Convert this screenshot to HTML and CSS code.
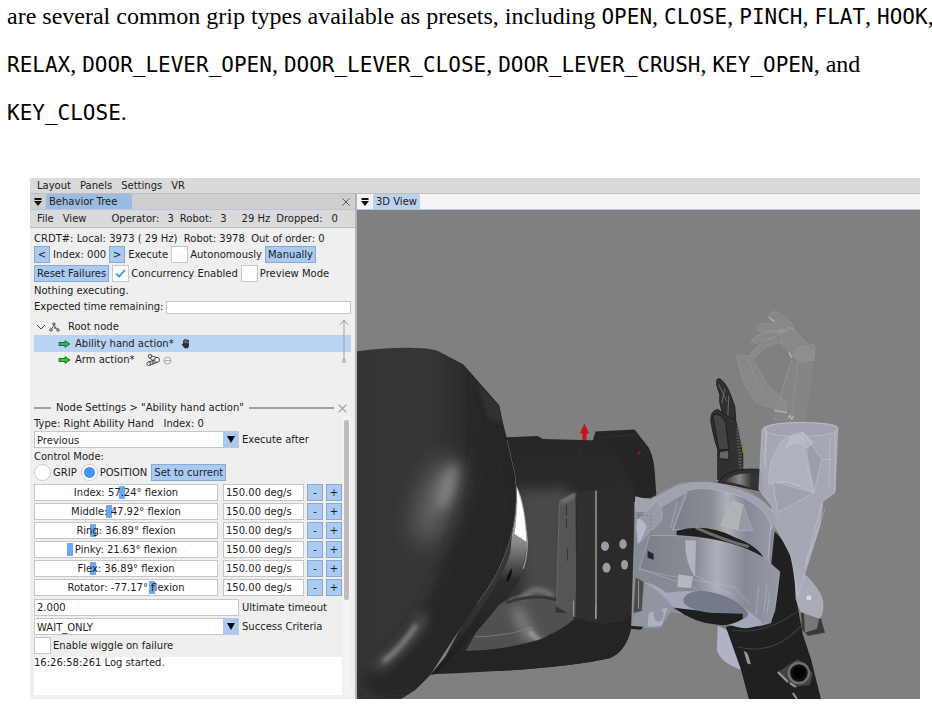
FILE: index.html
```html
<!DOCTYPE html>
<html lang="en">
<head>
<meta charset="utf-8">
<title>Grip presets</title>
<link rel="stylesheet" href="styles.css">
</head>
<body>
<p class="prose">are several common grip types available as presets, including <code>OPEN</code>, <code>CLOSE</code>, <code>PINCH</code>, <code>FLAT</code>, <code>HOOK</code>,<br><code>RELAX</code>, <code>DOOR_LEVER_OPEN</code>, <code>DOOR_LEVER_CLOSE</code>, <code>DOOR_LEVER_CRUSH</code>, <code>KEY_OPEN</code>, and<br><code>KEY_CLOSE</code>.</p>

<main class="app">
  <nav class="menubar"><a href="#">Layout</a><a href="#">Panels</a><a href="#">Settings</a><a href="#">VR</a></nav>
  <div class="columns">
    <section class="panel">
      <header class="tabs">
        <svg class="fold" viewBox="0 0 8 8"><path d="M.5 0h7v2h-7zM0 3h8L4 8z"/></svg>
        <h2 class="tab">Behavior Tree</h2>
        <button class="close" aria-label="Close panel"><svg viewBox="0 0 8 8"><path d="M.5.5l7 7m0-7l-7 7"/></svg></button>
      </header>
      <div class="status">
        <a href="#">File</a><a href="#">View</a>
        <span class="stat op">Operator:<b>3</b></span><span class="stat">Robot:<b>3</b></span><span class="stat hz">29 Hz</span><span class="stat drop">Dropped:<b>0</b></span>
      </div>
      <div class="controls">
        <p class="line crdt">CRDT#: Local: 3973 ( 29 Hz)  Robot: 3978  Out of order: 0</p>
        <div class="row"><button class="btn sq">&lt;</button><span>Index: 000</span><button class="btn sq">&gt;</button><span>Execute</span><label class="check"><input type="checkbox"><span>Autonomously</span></label><button class="btn">Manually</button></div>
        <div class="row last"><button class="btn">Reset Failures</button><label class="check"><input type="checkbox" checked><svg class="tick" viewBox="0 0 12 10"><path d="M1 5l3.500 3.500L11 1"/></svg><span>Concurrency Enabled</span></label><label class="check"><input type="checkbox"><span>Preview Mode</span></label></div>
        <p class="line">Nothing executing.</p>
        <label class="expected"><span>Expected time remaining:</span><input type="text"></label>
      </div>
      <div class="tree">
        <ul>
          <li class="root"><svg class="chev" viewBox="0 0 10 6"><path d="M1 1l4 4 4-4"/></svg><svg class="nodes" viewBox="0 0 11 10"><path d="M5 3L2.500 7M5 3l1.500 2.500L8.500 7"/><circle cx="5" cy="2" r="1.200"/><circle cx="2" cy="8" r="1.300"/><circle cx="6" cy="6" r=".6"/><circle cx="9" cy="8" r="1.300"/></svg>Root node</li>
          <li class="leaf selected"><svg class="arrow teal" viewBox="0 0 13 8"><path d="M1 2.500h6V.7L12 4 7 7.300V5.500H1z"/></svg>Ability hand action*<svg class="hand" viewBox="0 0 9 11"><path d="M2.200 8.500L.8 6.500Q.8 5 2 6V2.500q.6-1 1.200 0V1.500q.7-1 1.300 0 .7-.8 1.300.2.7-.7 1.200.3.9-.3 1 .7V8L7 10.300H3.500z"/><path class="slits" d="M3.200 2.500v2.800M4.600 2v3M5.900 2.400v2.800M7.100 3v2.500"/></svg></li>
          <li class="leaf"><svg class="arrow" viewBox="0 0 13 8"><path d="M1 2.500h6V.7L12 4 7 7.300V5.500H1z"/></svg>Arm action*<svg class="joint" viewBox="0 0 14 12"><path d="M5.200 1.500l5 2M3 3.500l4.500 3.300M11 8.400l-7.500 3M8.500 5.700L2 8.300"/><circle cx="4" cy="2.200" r="1.700"/><circle cx="11" cy="5.900" r="2.500"/><circle cx="2.700" cy="9.700" r="1.800"/><circle cx="7" cy="8.500" r="1"/></svg><svg class="minus" viewBox="0 0 9 9"><circle cx="4.500" cy="4.500" r="3.500"/><path d="M1 4.500h7"/></svg></li>
        </ul>
        <svg class="span" viewBox="0 0 10 45"><path d="M5 1v40M.8 6L5 1l4.200 5"/><circle cx="5" cy="42" r="1.500"/></svg>
      </div>
      <div class="divider"><i class="rule"></i><h3>Node Settings &gt; "Ability hand action"</h3><i class="rule grow"></i><button class="close faint" aria-label="Close settings"><svg viewBox="0 0 8 8"><path d="M.5.5l7 7m0-7l-7 7"/></svg></button></div>
      <div class="settings">
        <div class="form">
          <p class="line type">Type: Right Ability Hand   Index: 0</p>
          <label class="field"><span class="combo"><select><option>Previous</option></select><svg viewBox="0 0 8 7"><path d="M0 0h8L4 7z"/></svg></span>Execute after</label>
          <p class="line mode">Control Mode:</p>
          <div class="row radios"><label><input type="radio" name="mode">GRIP</label><label><input type="radio" name="mode" checked>POSITION</label><button class="btn">Set to current</button></div>
          <div class="fingers">
            <div class="finger"><label class="slide"><input type="range" min="0" max="1000" value="477"><span>Index: 57.24° flexion</span></label><input class="box" aria-label="Index speed" value="150.00 deg/s"><button class="btn sq">-</button><button class="btn sq">+</button></div>
            <div class="finger"><label class="slide"><input type="range" min="0" max="1000" value="403"><span>Middle: 47.92° flexion</span></label><input class="box" aria-label="Middle speed" value="150.00 deg/s"><button class="btn sq">-</button><button class="btn sq">+</button></div>
            <div class="finger"><label class="slide"><input type="range" min="0" max="1000" value="310"><span>Ring: 36.89° flexion</span></label><input class="box" aria-label="Ring speed" value="150.00 deg/s"><button class="btn sq">-</button><button class="btn sq">+</button></div>
            <div class="finger"><label class="slide"><input type="range" min="0" max="1000" value="182"><span>Pinky: 21.63° flexion</span></label><input class="box" aria-label="Pinky speed" value="150.00 deg/s"><button class="btn sq">-</button><button class="btn sq">+</button></div>
            <div class="finger"><label class="slide"><input type="range" min="0" max="1000" value="310"><span>Flex: 36.89° flexion</span></label><input class="box" aria-label="Flex speed" value="150.00 deg/s"><button class="btn sq">-</button><button class="btn sq">+</button></div>
            <div class="finger"><label class="slide"><input type="range" min="0" max="1000" value="645"><span>Rotator: -77.17° flexion</span></label><input class="box" aria-label="Rotator speed" value="150.00 deg/s"><button class="btn sq">-</button><button class="btn sq">+</button></div>
          </div>
          <div class="tail">
            <label class="field"><input class="box" value="2.000">Ultimate timeout</label>
            <label class="field"><span class="combo"><select><option>WAIT_ONLY</option></select><svg viewBox="0 0 8 7"><path d="M0 0h8L4 7z"/></svg></span>Success Criteria</label>
            <label class="check"><input type="checkbox"><span>Enable wiggle on failure</span></label>
          </div>
          <div class="log">16:26:58:261 Log started.</div>
        </div>
        <div class="track"><div class="thumb"></div></div>
      </div>
    </section>

    <section class="view">
      <header class="tabs">
        <svg class="fold" viewBox="0 0 8 8"><path d="M.5 0h7v2h-7zM0 3h8L4 8z"/></svg>
        <h2 class="tab">3D View</h2>
      </header>
      <svg class="scene" viewBox="357 210 563 488" preserveAspectRatio="xMinYMin slice" role="img" aria-label="Robot arm">
        <defs>
          <filter id="b2" x="-50%" y="-50%" width="200%" height="200%"><feGaussianBlur stdDeviation="2"/></filter>
          <filter id="b6" x="-80%" y="-80%" width="260%" height="260%"><feGaussianBlur stdDeviation="6"/></filter>
          <filter id="b12" x="-80%" y="-80%" width="260%" height="260%"><feGaussianBlur stdDeviation="13"/></filter>
          <linearGradient id="head" x1="0" x2="1" y1="0" y2="0"><stop offset="0" stop-color="#343434"/><stop offset=".45" stop-color="#363636"/><stop offset=".7" stop-color="#2a2a2a"/><stop offset="1" stop-color="#232323"/></linearGradient>
          <linearGradient id="torso" x1="0" x2="0" y1="0" y2="1"><stop offset="0" stop-color="#262626"/><stop offset=".25" stop-color="#2a2a2a"/><stop offset=".45" stop-color="#393939"/><stop offset=".75" stop-color="#303030"/><stop offset="1" stop-color="#202020"/></linearGradient>
          <linearGradient id="ring" x1="0" x2="0" y1="0" y2="1"><stop offset="0" stop-color="#c8c8c8"/><stop offset=".3" stop-color="#8a8a8a"/><stop offset=".5" stop-color="#2c2c2c"/><stop offset="1" stop-color="#1d1d1d"/></linearGradient>
          <linearGradient id="drum" x1="0" x2="1" y1="0" y2="0"><stop offset="0" stop-color="#797f89"/><stop offset=".4" stop-color="#898d95"/><stop offset=".55" stop-color="#adb0b9"/><stop offset=".75" stop-color="#858a96"/><stop offset="1" stop-color="#9599a6"/></linearGradient>
          <linearGradient id="cup" x1="0" x2="1" y1="0" y2="0"><stop offset="0" stop-color="#333"/><stop offset=".45" stop-color="#8a8780"/><stop offset=".8" stop-color="#333"/></linearGradient>
          <clipPath id="headclip"><path id="hp" d="M357 351Q385 347 410 347.500T440 352L463 364L499 405L502 420L507 440L515 474Q519 510 509 542Q500 574 477 603Q455 634 430 674L415 689L401 698H357Z"/></clipPath>
          <clipPath id="bodyclip"><path d="M500 437L537 435.500L543 438.500L600 440L615 452L633 484L635 550L632 620Q628 649 610 657L590 661Q530 670 436 673L480 590Z"/></clipPath>
        </defs>
        <rect x="357" y="210" width="1100" height="1000" fill="#808080"/>
        <path d="M592 441L595 431L634 429L648 447Q653 456 654 470L656 498L630 502L608 470Z" fill="#252525"/>
        <path d="M600 437L634 434L647 452" fill="none" stroke="#303030"/>
        <path d="M582 440V433H579.500L584 423L588.500 433H586V440Z" fill="#c71115"/><path d="M636.500 452.500l2-2.500 2 2.500-2 2.500z" fill="#a20b0f"/>
        <g clip-path="url(#bodyclip)">
          <rect x="430" y="430" width="210" height="250" fill="url(#torso)"/>
          <path d="M578 441Q586 465 590 488L596 490V620L575 620L573 480Z" fill="#292929"/>
          <path d="M517 487Q537 492 568 486L560 600L535 604L525 590Z" fill="#494949" filter="url(#b6)"/>
          <path d="M559 500L575 492L576 617L556 606Z" fill="#555"/><path d="M561 502L575 493" stroke="#999" stroke-width="2" filter="url(#b2)"/>
          <path d="M559 502L556 604" stroke="#686868"/><path d="M566 503v12m0 3v10m1 20v12" stroke="#333"/>
          <path d="M577 492L595 489L596 621L575 617Z" fill="#303030"/>
          <path d="M595.500 490V618" stroke="#999" stroke-width="1.500"/>
          <path d="M597 488L628 482L635 550L631 628L597 620Z" fill="#2b2b2b"/>
          <path d="M512 596Q530 588 556 598L555 612Q575 610 573 619Q540 647 465 651L488 610Z" fill="#505050"/>
          <path d="M521 598Q535 582 553 596" fill="none" stroke="#777" stroke-width="5" filter="url(#b2)"/>
          <path d="M506 602Q535 592 556 599" fill="none" stroke="#363636" stroke-width="3"/>
          <path d="M474 636Q510 635 532 626" fill="none" stroke="#767676"/>
          <path d="M515 607L532 641" stroke="#858585" stroke-width="10" filter="url(#b6)"/>
          <path d="M529 630Q540 645 548 638" fill="none" stroke="#bbb" stroke-width="3" filter="url(#b2)"/>
          <path d="M465 650Q544 648 573 619L597 622Q620 625 632 613L625 670H436Z" fill="#242424"/>
          <path d="M573 600V616M595 605V618" stroke="#999"/>
        </g>
        <path d="M516 485Q526 505 527 543L522 570Q516 592 498 605Q479 630 436 673L430 674Q496 597 510 552Z" fill="url(#ring)"/>
        <path d="M516.500 488Q525 510 526 541L514 533Q518 512 516.500 488Z" fill="#fff"/>
        <path d="M526 530Q529 550 523 568" fill="none" stroke="#aaa"/>
        <path d="M512 567Q506 574 506 581Q511 580 512 567Z" fill="#111"/>
        <use href="#hp" fill="url(#head)"/>
        <g clip-path="url(#headclip)">
          <path d="M475 375Q485 440 465 500Q450 560 420 610Q395 650 360 680L380 698L430 698Q515 590 514 500L500 405Z" fill="#252525" filter="url(#b6)"/>
          <ellipse cx="436" cy="500" rx="14" ry="44" fill="#6e6e6e" transform="rotate(20 436 500)" filter="url(#b12)"/>
          <ellipse cx="447" cy="486" rx="7" ry="24" fill="#858585" transform="rotate(17 447 486)" filter="url(#b6)"/>
          <path d="M377 666Q409 646 424 614" fill="none" stroke="#6e6e6e" stroke-width="6" filter="url(#b6)"/>
          <path d="M383 661Q403 645 416 624" fill="none" stroke="#888" stroke-width="4" filter="url(#b2)"/>
          <path d="M478 382L499 405L502 424L486 415Z" fill="#333" filter="url(#b2)"/>
          <path d="M507 440L515 474Q519 510 509 542Q500 574 477 603" fill="none" stroke="#777" stroke-width="1"/>
        </g>
        <g fill="#9a9da6"><ellipse cx="604.500" cy="545.500" rx="4" ry="4.800"/><ellipse cx="622.500" cy="543.500" rx="3.700" ry="4.800"/><ellipse cx="606" cy="567" rx="4" ry="5"/><ellipse cx="624" cy="564" rx="3.500" ry="4.800"/></g>

        <g fill="#a4a4a4" fill-opacity=".24" stroke="#aaa" stroke-opacity=".4" stroke-width=".8">
          <path d="M768 315Q771 309 778 313L790 322L794 330Q783 327 770 319Z"/>
          <path d="M755 327Q760 321 776 324L788 331L778 332L757 331Z"/>
          <path d="M750 342Q755 333 770 330L785 331L773 337L756 343Z"/>
          <path d="M749 356Q755 343 775 336L781 342Q763 344 755 357Z"/>
          <path d="M779 330L790 327L806 343L814 345L813 361L794 358L781 344Z"/>
          <ellipse cx="803" cy="354" rx="10" ry="8"/>
          <path d="M736 358Q736 354 741 355L751 356Q758 370 765 382L779 396L785 402L786 411L769 407L755 402L743 383Z"/>
          <path d="M746 357Q752 375 763 394" fill="none"/>
          <path d="M790 360L812 363L804 422L772 420Z" stroke-opacity=".15" fill-opacity=".15"/>
          <path d="M797 361L790 420M780 395L790 361"/>
        </g>
        <path d="M768 317l6 5M788 352l3 6M773 410l13 2M787 418l2-3 2 4 2-4" fill="none" stroke="#ccc" stroke-opacity=".8"/>
        <g fill="#303030" stroke="#161616" stroke-width=".8">
          <path d="M716 381Q716 377 720 379Q726 384 730 395L734 406L735 419L724 423L719 402L719 394L716 385Z"/>
          <path d="M718 384L726 401M724 388L721 403M728 395L727 417" fill="none" stroke="#777"/>
          <path d="M710 420Q710 410 717 409L727 416L735 420L742 454L742 474L717 479L717 449Q713 438 710 420Z"/>
          <path d="M712 415Q720 411 725 422L728 449L718 449Z" fill="#444"/>
          <path d="M719 451L728 450L728 459L718 458Z" fill="#666"/>
          <path d="M717 482Q728 466 760 469L763 491Q740 486 717 482Z"/>
        </g>
        <path d="M737 428L740 468" stroke="#666" stroke-width="4" stroke-dasharray="1 2"/><path d="M742 443v9" stroke="#927b20"/>
        <path d="M723 481Q735 470 758 474L758 490Q740 483 723 481Z" fill="url(#cup)"/>

        <path d="M717 625L730 631L741 669Q720 662 716 649Z" fill="#b0b3c6"/>
        <path d="M771 528Q791 545 793 575L796 602L802 634L810 658L820 698H748L740 668L725 626L765 618Z" fill="#202020"/>
        <path d="M737 646Q774 655 801 624M731 629Q762 635 796 611" fill="none" stroke="#404040"/>
        <path d="M743 650q4 1 5 6l2 7q-3 1-4-2z" fill="#989898"/>
        <path d="M777 671L797 658L812 672L809 684L792 686Z" fill="#444"/><path d="M777 671L787 681M789 682l6 4M792 692l4 6" stroke="#999" stroke-width="2"/>
        <circle cx="798" cy="672" r="10" fill="#111" stroke="#6e6e6e" stroke-width="2.500"/><circle cx="798" cy="672" r="6" fill="#000"/>
        <path d="M800 611L820 618L824 632L807 635L801 629Z" fill="#3a3a3a"/><path d="M803 612L818 619L816 628L804 632Z" fill="#777"/>

        <g stroke="#cfd2e0" stroke-opacity=".5" stroke-width=".8">
          <path d="M794 565Q824 590 822 606Q822 614 818 618L800 611L795 598Z" fill="#adb0be" fill-opacity=".9"/>
          <path d="M761 430Q762 422 800 422T837 428L834 492L822 501L819 525L797 595L790 555L779 534L771 520L771 506L758 489Z" fill="#a8abb9" fill-opacity=".92"/>
          <ellipse cx="800" cy="429" rx="37" ry="7" fill="#a0a3b1"/>
          <path d="M789 436Q779 440 776 449Q767 464 768 483L786 481L813 492L802 446Z" fill="#b4b6c0" fill-opacity=".7"/>
          <path d="M802 432L821 459L813 492Z" fill="#979ba8" fill-opacity=".7"/>
          <path d="M772 481L813 492L777 512Z" fill="#9da0a8" fill-opacity=".8"/>
          <path d="M821 503L805 562M824 508L804 567M834 430V490M766 430L763 465M829 437L828 487" fill="none"/>
          <path d="M765 427V468M821 459H831M780 481L800 485" fill="none"/>
          <path d="M792 434L785 448Q795 436 806 448L812 442L802 432Z" fill="#c2c4cf" fill-opacity=".6"/>
        </g>
        <circle cx="808" cy="597" r="2.500" fill="#d7d9e7"/>

        <g stroke="#bfc2d2" stroke-opacity=".55" stroke-width=".8">
          <path d="M635 498L650 498L677 484Q700 478 735 486Q765 497 776 517L773 534L770 563L778 575Q776 600 770 622Q750 630 715 620L670 610L659 626L631 625Z" fill="#858a93"/>
          <path d="M635 496L650 500L676 486Q705 477 740 490Q768 501 776 518L771 529Q764 507 735 496Q706 487 690 489L654 510L636 511Z" fill="#9fa3af"/>
          <path d="M686 490Q708 484 740 496Q765 507 770 524L768 560Q740 534 708 528L672 529Z" fill="url(#drum)"/>
          <path d="M732 500L742 504L737 529L720 525Z" fill="#b0b2b6"/><path d="M742 504L752 530L737 530Z" fill="#969aa3"/>
          <path d="M687 491L672 530M677 501L670 527M770 524L767 557" fill="none"/>
          <path d="M676 530Q706 522 735 537Q756 545 763 557Q730 546 676 535Z" fill="#202020" stroke="none"/>
          <path d="M695 527Q724 540 748 546" fill="none" stroke="#aaa" stroke-width="3"/>
          <path d="M649 535Q720 532 763 557L779 571L774 610Q770 623 757 625Q720 616 692 586L639 568Z" fill="url(#drum)"/>
          <path d="M685 540L695 540L694 575Q684 560 685 540Z" fill="#b0b4c1"/>
          <path d="M638 568L668 575L733 586L749 604M693 574L733 595M758 585L755 614M766 584L763 612M769 590L766 614" fill="none"/>
          <path d="M678 574L692 576L690 587L677 586Z" fill="#b4b8c0"/>
          <path d="M656 500Q670 518 650 530L640 541Q632 525 639 518Z" fill="#969ba6"/>
          <path d="M637 515H650V535" fill="none" stroke="#555" stroke-dasharray="2 2"/>
        </g>
        <path d="M636 518Q643 518 646 526Q642 538 637 544Z" fill="#b5b9c9"/>
        <path d="M647 550l6 3v6l-6-2z" fill="#272727"/>
        <path d="M644 582Q658 588 673 607L660 627H631L633 614L642 611Z" fill="#9195a0"/>
        <path d="M648 612L667 607L661 625L647 626Z" fill="#adb0c0"/><ellipse cx="658" cy="614" rx="5" ry="7" fill="#9396a2"/>
        <path d="M635 577L643 581L641 610L633 612Z" fill="#4c4b49"/><path d="M638 580V608" stroke="#999"/>
        <path d="M642 581Q655 583 666 592Q705 585 740 604L762 622Q750 630 735 626Q696 612 672 606Q660 590 642 581Z" fill="#a4a8ba"/>
        <path d="M673 607L718 612L743 612L744 617Q730 626 717 624Q695 623 673 607Z" fill="#1e1e1e"/>
        <path d="M683 602Q681 592 699 590Q729 592 746 610Q750 616 742 618L742 613L709 612Q688 609 683 602Z" fill="#747a8a"/>
        <path d="M629 625L643 626L640 629L629 628Z" fill="#222"/>
      </svg>
    </section>
  </div>
</main>
</body>
</html>
```
FILE: styles.css
```css
* { box-sizing: border-box; }
body { margin: 0; background: #fff; color: #000; }
p, h2, h3, ul { margin: 0; padding: 0; font-weight: inherit; font-size: inherit; }

.prose {
  margin: -8px 0 42px;
  padding-left: 7px;
  font: 24px/48px "Liberation Serif", serif;
  white-space: nowrap;
}
.prose code { font: 21px/24px "DejaVu Sans Mono", monospace; }

.app {
  margin: 0 12px 6px 30px;
  font: 10px/16px "DejaVu Sans", sans-serif;
  color: #1c1c1c;
  background: #efefef;
}
.app a { color: inherit; text-decoration: none; }
.app button, .app input, .app select { font: inherit; color: inherit; margin: 0; border-radius: 0; }
.app svg { flex: none; }

.menubar {
  display: flex;
  gap: 9px;
  height: 16px;
  padding-left: 7px;
  line-height: 15px;
  background: #dadada;
  border-bottom: 1px solid #bdbdbd;
}
.columns { display: grid; grid-template-columns: 327px 1fr; }
.panel { border-right: 2px solid #b4b4b4; }

.tabs {
  display: flex;
  align-items: center;
  height: 16px;
  padding-left: 4px;
  background: #cfcfcf;
  border-bottom: 1px solid #b9c6d8;
}
.fold { width: 8px; height: 8px; margin-right: 4px; fill: #111; }
.tab { padding: 0 15px 0 3px; line-height: 15px; background: #9bbbe2; border-radius: 2px 2px 0 0; }
.app .close { margin-left: auto; padding: 0; border: 0; background: none; display: flex; }
.app .tabs .close { margin-right: 5px; }
.close svg { width: 8px; height: 8px; fill: none; stroke: #555; stroke-width: 1; }
.view .tabs { background: #f4f4f4; }
.view .tab { padding-right: 3px; background: #bdd1ec; }
.view { display: flex; flex-direction: column; min-width: 0; }
.app .scene { flex: 1 1 0; width: 100%; min-height: 0; display: block; }

.status {
  display: flex;
  gap: 9px;
  height: 18px;
  padding-left: 7px;
  line-height: 17px;
  background: #dadada;
  border-bottom: 1px solid #bdbdbd;
}
.stat { display: flex; gap: 8px; margin-right: -3px; }
.stat b { font-weight: 400; }
.stat.op { margin-left: 16px; }
.stat.hz { margin-left: 9px; }
.stat.drop b { margin-left: 1px; }

.controls { padding: 3px 4px 0; }
.line { white-space: pre; }
.line.crdt, .line.type { line-height: 15px; }
.row { display: flex; align-items: center; gap: 3px; height: 17px; margin-bottom: 2px; white-space: nowrap; }
.row.last { margin-bottom: 1px; }
.btn {
  height: 17px;
  padding: 0 2px;
  line-height: 15px;
  border: 1px solid #8ba9d0;
  background: #a9caf3;
}
.btn.sq { width: 16px; padding: 0; text-align: center; }
.check { display: flex; align-items: center; gap: 2px; position: relative; }
.check input { appearance: none; width: 17px; height: 17px; background: #fff; border: 1px solid #c6c6c6; }
.tick { position: absolute; left: 3px; top: 4px; width: 11px; height: 9px; fill: none; stroke: #4296fa; stroke-width: 2; }
.expected { display: flex; align-items: center; gap: 3px; height: 16px; }
.expected input { flex: 1; min-width: 0; height: 13px; border: 1px solid #c6c6c6; background: #fff; }

.tree { display: flex; height: 81px; margin: 4px 4px 0; position: relative; }
.tree ul { flex: 1; list-style: none; }
.tree li { display: flex; align-items: center; height: 16px; }
.tree li.selected { height: 17px; background: #b9d3f3; }
.tree .root { padding-left: 2px; }
.leaf { padding-left: 24px; }
.chev { width: 10px; height: 6px; margin-right: 3px; fill: none; stroke: #444; }
.nodes { width: 11px; height: 10px; margin-right: 8px; fill: #ddd; stroke: #333; stroke-width: .8; }
.arrow { width: 13px; height: 8px; margin-right: 4px; fill: #16e01a; stroke: #154a15; stroke-width: .8; }
.arrow.teal { fill: #20c268; }
.hand { width: 9px; height: 11px; margin-left: 7px; fill: #2b2f35; }
.slits { fill: none; stroke: #b9d3f3; stroke-width: .4; }
.joint { width: 14px; height: 12px; margin-left: 12px; fill: #eee; stroke: #333; stroke-width: .9; }
.minus { width: 9px; height: 9px; margin-left: 3px; fill: none; stroke: #aaa; }
.span { position: absolute; right: 2px; top: 0; width: 10px; height: 45px; fill: none; stroke: #999; stroke-width: .9; }

.divider { display: flex; align-items: center; height: 16px; padding: 0 8px 0 4px; }
.rule { width: 17px; height: 2px; background: #a0a0a0; }
.rule.grow { flex: 1; }
.divider h3 { margin: 0 5px; }
.app .divider .close { margin-left: 4px; }
.app .faint svg { width: 9px; height: 9px; stroke: #999; }

.settings { display: flex; padding: 0 4px 4px; }
.form { flex: 1; min-width: 0; }
.track { width: 8px; margin-left: 1px; padding: 4px 2px 0 1px; background: #f3f3f3; }
.thumb { height: 180px; border-radius: 2px; background: #bdbdbd; }
.field { display: grid; grid-template-columns: 205px 1fr; column-gap: 3px; height: 17px; line-height: 17px; white-space: nowrap; }
.combo { position: relative; display: block; }
.combo select { appearance: none; display: block; width: 100%; height: 17px; padding: 0 2px; border: 1px solid #c6c6c6; background: linear-gradient(#a9caf3, #a9caf3) right / 15px 100% no-repeat #fff; }
.combo svg { position: absolute; right: 4px; top: 5px; width: 8px; height: 7px; fill: #000; pointer-events: none; }
.line.mode { margin-top: 2px; line-height: 14px; }
.radios { gap: 4px; margin-bottom: 3px; }
.radios label { display: flex; align-items: center; gap: 2px; }
.app .radios input { appearance: none; width: 17px; height: 17px; border: 1px solid #ccc; border-radius: 50%; background: #fff; }
.app .radios input:checked { background: radial-gradient(circle, #4296fa 0 5px, #fff 6px); }

.fingers { display: grid; gap: 2px; }
.finger { display: grid; grid-template-columns: 186px 1fr 16px 16px; column-gap: 3px; height: 17px; }
.slide { display: grid; width: 184px; background: #fff; border: 1px solid #c6c6c6; }
.slide input, .slide span { grid-area: 1 / 1; }
.slide input { appearance: none; width: 100%; height: 15px; background: none; }
.slide input::-webkit-slider-thumb { appearance: none; width: 6px; height: 13px; background: #6aa9f5; }
.slide span { z-index: 1; text-align: center; line-height: 15px; pointer-events: none; }
.box { width: 100%; min-width: 0; height: 17px; padding: 0 2px; border: 1px solid #c6c6c6; background: #fff; }
.tail { display: grid; gap: 2px; margin-top: 3px; }
.log { height: 38px; margin-top: 3px; line-height: 12px; background: #fff; }
```
